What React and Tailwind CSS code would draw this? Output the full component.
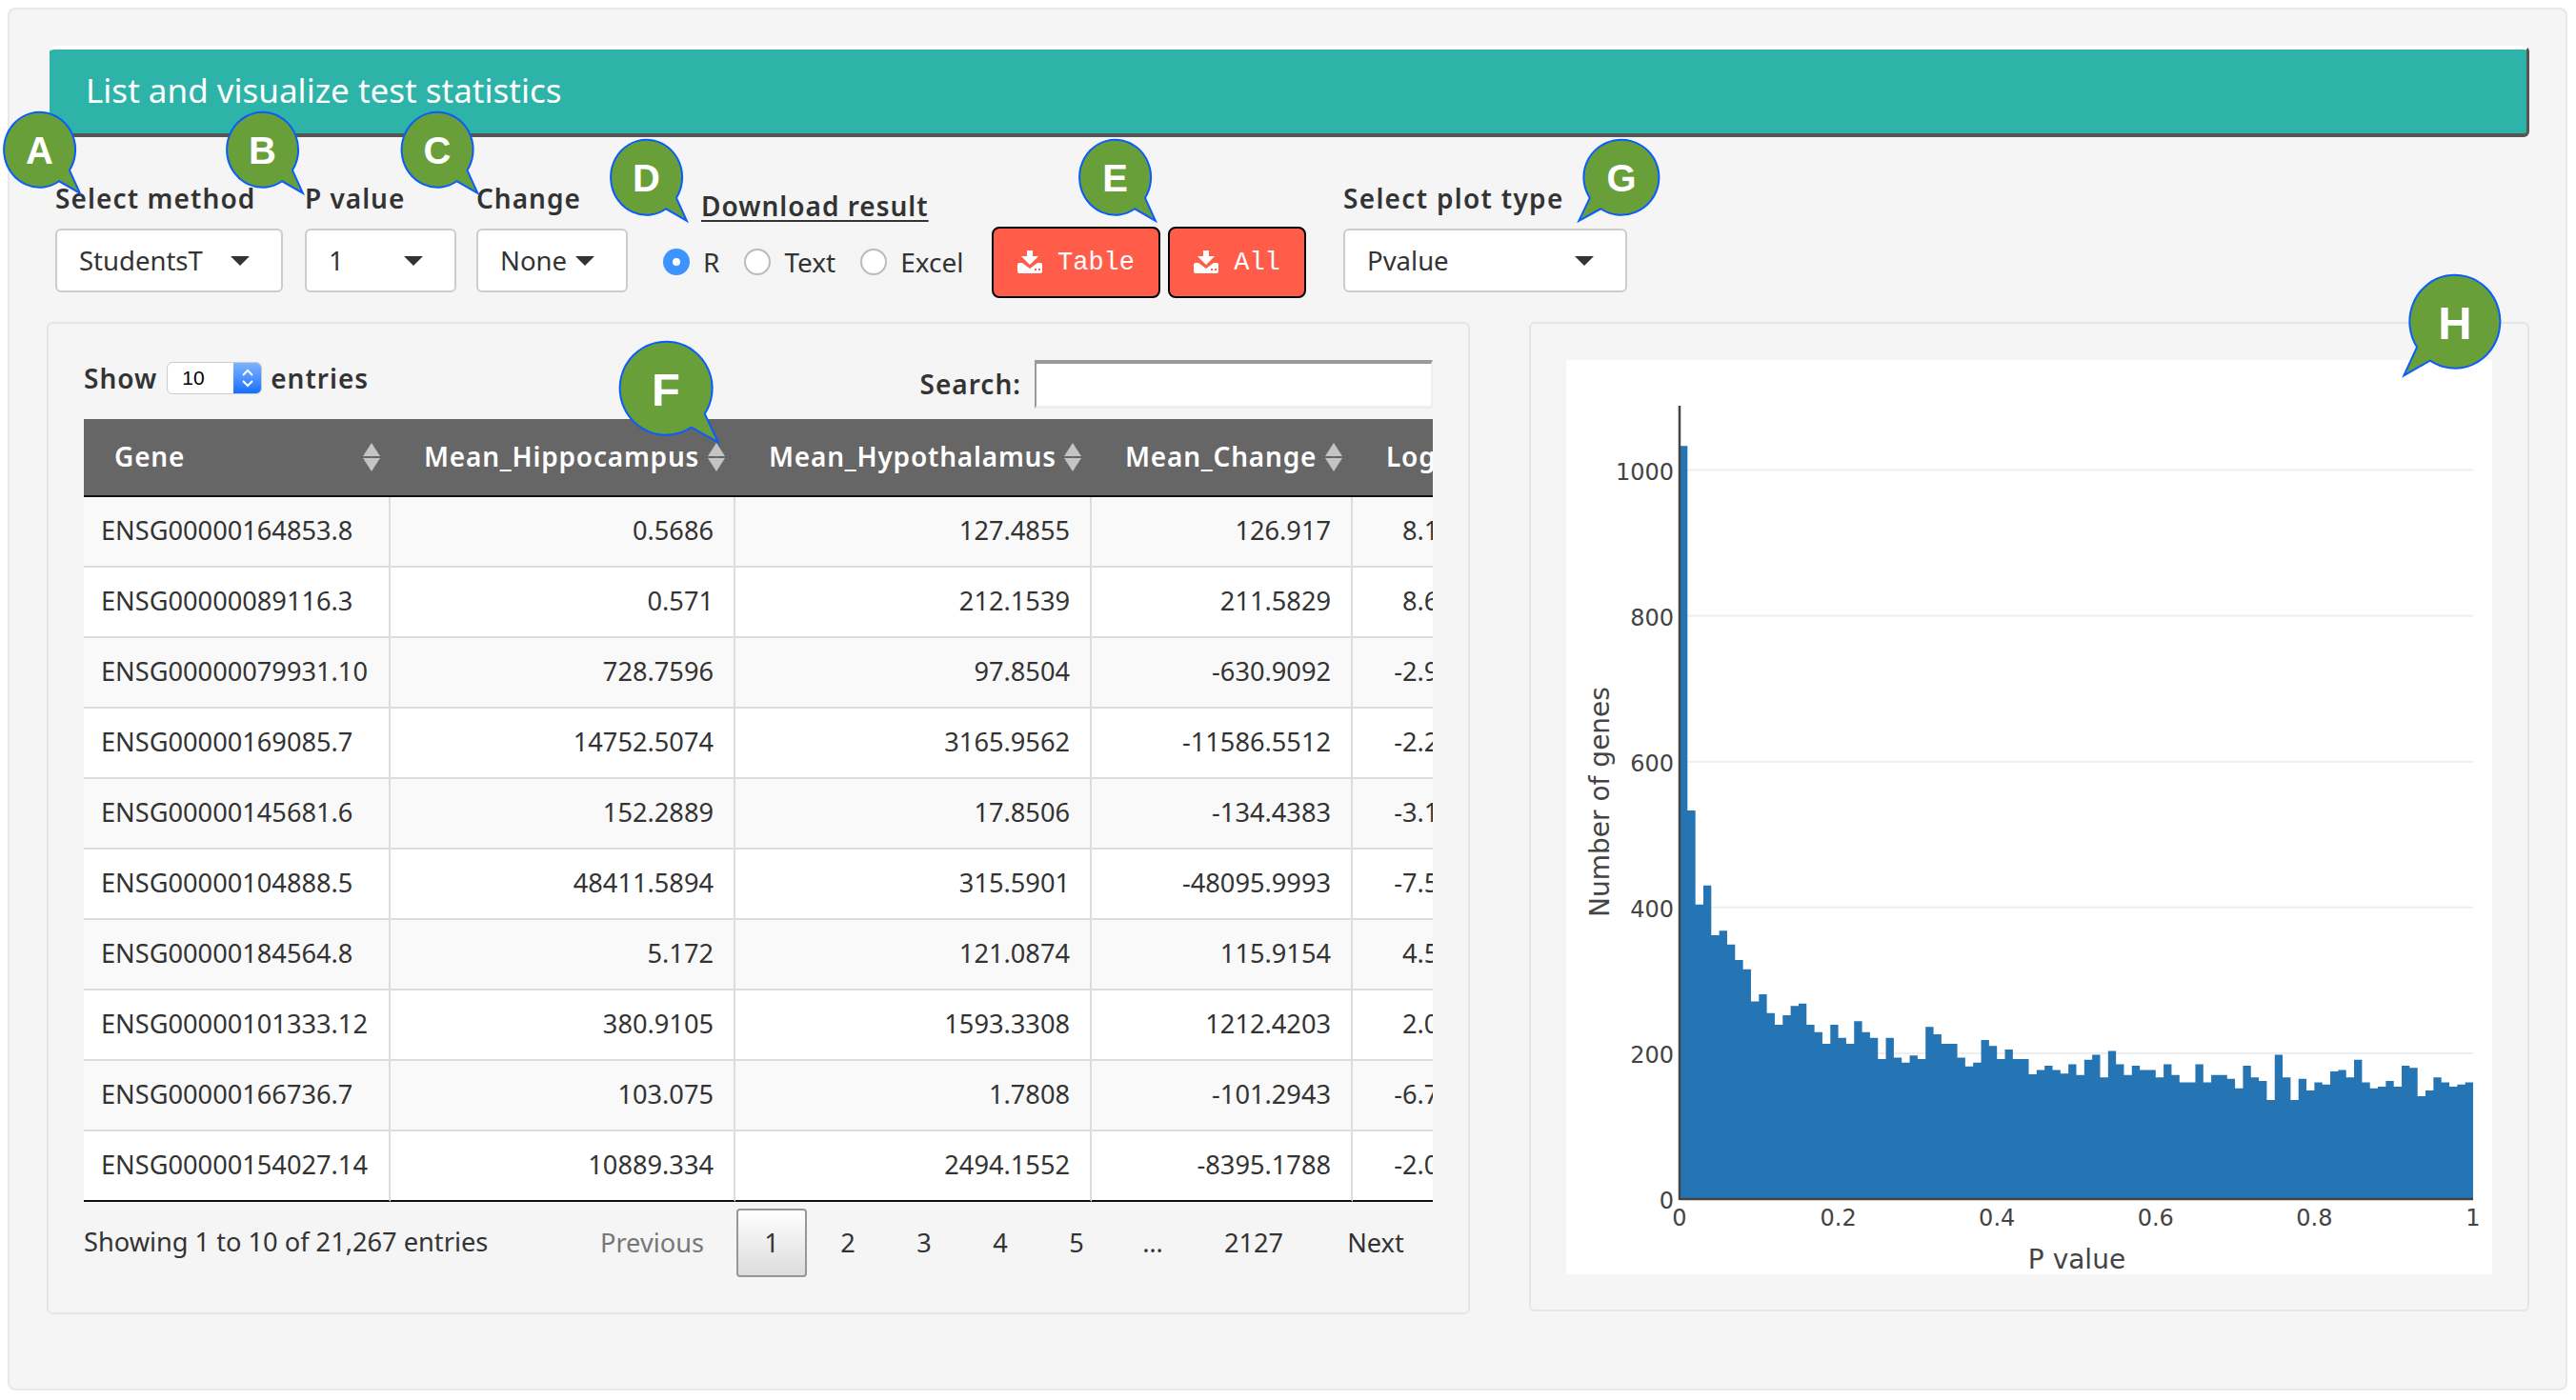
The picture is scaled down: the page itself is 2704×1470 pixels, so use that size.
const rows = [
    ['ENSG00000164853.8', '0.5686', '127.4855', '126.917', '8.1383'],
    ['ENSG00000089116.3', '0.571', '212.1539', '211.5829', '8.6563'],
    ['ENSG00000079931.10', '728.7596', '97.8504', '-630.9092', '-2.9069'],
    ['ENSG00000169085.7', '14752.5074', '3165.9562', '-11586.5512', '-2.2202'],
    ['ENSG00000145681.6', '152.2889', '17.8506', '-134.4383', '-3.1148'],
    ['ENSG00000104888.5', '48411.5894', '315.5901', '-48095.9993', '-7.5615'],
    ['ENSG00000184564.8', '5.172', '121.0874', '115.9154', '4.5492'],
    ['ENSG00000101333.12', '380.9105', '1593.3308', '1212.4203', '2.0643'],
    ['ENSG00000166736.7', '103.075', '1.7808', '-101.2943', '-6.7095'],
    ['ENSG00000154027.14', '10889.334', '2494.1552', '-8395.1788', '-2.0326'],
];

const bins = [
    1033, 533, 404, 430, 362, 368, 349, 328, 315, 271, 281, 255, 239, 252, 265, 268, 239, 229, 213, 239,
    221, 213, 244, 229, 221, 192, 221, 194, 187, 197, 192, 236, 226, 213, 213, 194, 182, 187, 218, 210,
    192, 205, 192, 192, 171, 177, 183, 177, 172, 185, 170, 191, 198, 167, 203, 185, 170, 183, 177, 177,
    167, 185, 170, 160, 160, 185, 160, 170, 170, 165, 152, 183, 167, 162, 136, 198, 167, 136, 165, 149,
    160, 157, 175, 177, 167, 191, 160, 152, 154, 162, 154, 183, 180, 141, 149, 167, 160, 154, 157, 160,
];

const callouts = [
    { letter: 'A', cx: 41.5, cy: 157.5, rx: 37.5, ry: 39.5, size: 40 },
    { letter: 'B', cx: 275.5, cy: 157.5, rx: 37.5, ry: 39.5, size: 40 },
    { letter: 'C', cx: 459, cy: 157.5, rx: 37.5, ry: 39.5, size: 40 },
    { letter: 'D', cx: 678.5, cy: 186.5, rx: 37.5, ry: 39.5, size: 40 },
    { letter: 'E', cx: 1170.5, cy: 186.5, rx: 37.5, ry: 39.5, size: 40 },
    { letter: 'G', cx: 1702, cy: 186.5, rx: 39.5, ry: 39.5, size: 40, flip: true },
    { letter: 'F', cx: 699, cy: 408, rx: 48.5, ry: 49, size: 49 },
    { letter: 'H', cx: 2577, cy: 338, rx: 47.5, ry: 49, size: 49, flip: true },
];

const Callouts = () => (
    <svg className="absolute left-0 top-0 pointer-events-none" width="2704" height="1470">
        {callouts.map((c) => {
            const dir = c.flip ? -1 : 1;
            const p1 = [c.cx + dir * 0.84 * c.rx, c.cy + 0.54 * c.ry];
            const p2 = [c.cx + dir * 0.55 * c.rx, c.cy + 0.83 * c.ry];
            const tip = [c.cx + dir * 1.13 * c.rx, c.cy + 1.15 * c.ry];
            const d = `M${p1[0]} ${p1[1]} A${c.rx} ${c.ry} 0 1 ${c.flip ? 1 : 0} ${p2[0]} ${p2[1]} L${tip[0]} ${tip[1]} Z`;
            return (
                <g key={c.letter}>
                    <path d={d} fill="#689f38" stroke="#0a5cff" strokeWidth="2" />
                    <text x={c.cx} y={c.cy + c.size * 0.36} textAnchor="middle" fill="#fff" fontSize={c.size} fontWeight="700" fontFamily="Liberation Sans, sans-serif">
                        {c.letter}
                    </text>
                </g>
            );
        })}
    </svg>
);

const Caret = () => <span className="w-0 h-0 border-x-[10px] border-t-[10px] border-x-transparent border-t-[#333]"></span>;

const Select = ({ value }) => (
    <div className="h-[67px] flex items-center justify-between pl-[23px] pr-[33px] bg-white border-2 border-[#ccc] rounded-md text-[#333] text-[27.5px]">
        <span>{value}</span>
        <Caret />
    </div>
);

const Radio = ({ checked, label, className }) => (
    <div className={`flex items-center ${className}`}>
        {checked ? (
            <span className="w-7 h-7 rounded-full bg-[#3d94ff] flex items-center justify-center">
                <span className="w-2 h-2 rounded-full bg-white"></span>
            </span>
        ) : (
            <span className="w-7 h-7 rounded-full bg-white border-2 border-[#bbb]"></span>
        )}
        <span className="ml-[14px] text-[28px] leading-7 text-[#333]">{label}</span>
    </div>
);

const DownloadIcon = () => (
    <svg width="26" height="24" viewBox="0 0 26 24" fill="#fff" className="-mt-[2px]">
        <path d="M10 0h6v6h6l-9 9l-9-9h6z" />
        <path d="M2 13h3l8 6l8-6h3a2 2 0 0 1 2 2v7a2 2 0 0 1-2 2h-22a2 2 0 0 1-2-2v-7a2 2 0 0 1 2-2z" />
        <rect x="18" y="19" width="2" height="2" fill="#ff5c4a" />
        <rect x="22" y="19" width="2" height="2" fill="#ff5c4a" />
    </svg>
);

const DownloadButton = ({ label, className }) => (
    <button className={`h-[75px] mt-[42px] flex items-center justify-center gap-[16px] bg-[#ff5c4a] border-2 border-black rounded-lg text-white text-[27px] font-['Liberation_Mono',monospace] ${className}`}>
        <DownloadIcon />
        <span className="mt-[2px]">{label}</span>
    </button>
);

const SortIcon = () => (
    <svg width="18" height="30" viewBox="0 0 18 30" fill="#c4c4c4">
        <path d="M9 0l9 14h-18z" />
        <path d="M0 16h18l-9 14z" />
    </svg>
);

const HeaderCell = ({ label, className }) => (
    <th className={`h-[82px] p-0 pr-[11px] bg-[#666] border-b-2 border-[#111] text-white text-left text-[28px] tracking-[0.8px] font-semibold whitespace-nowrap ${className}`}>
        <div className="flex items-center justify-between">
            <span className="-mt-[2px]">{label}</span>
            <SortIcon />
        </div>
    </th>
);

const Chart = () => {
    const x0 = 119;
    const x1 = 952;
    const y0 = 881;
    const perCount = 0.7655;
    const binW = (x1 - x0) / bins.length;
    let d = `M${x0} ${y0}`;
    bins.forEach((n, i) => {
        const top = y0 - n * perCount;
        d += ` L${x0 + i * binW} ${top} L${x0 + (i + 1) * binW} ${top}`;
    });
    d += ` L${x1} ${y0} Z`;
    return (
        <svg width="972" height="960" fontFamily="DejaVu Sans, sans-serif" fill="#444">
            {[200, 400, 600, 800, 1000].map((t) => (
                <line key={t} x1={x0} x2={x1} y1={y0 - t * perCount} y2={y0 - t * perCount} stroke="#eeeeee" strokeWidth="2" />
            ))}
            <path d={d} fill="#2574b3" />
            <line x1={x0} x2={x0} y1="48" y2={y0 + 1} stroke="#444" strokeWidth="2.5" />
            <line x1={x0} x2={x1} y1={y0} y2={y0} stroke="#444" strokeWidth="2.5" />
            {[0, 200, 400, 600, 800, 1000].map((t) => (
                <text key={t} x="113" y={y0 - t * perCount + 10} textAnchor="end" fontSize="24">
                    {t}
                </text>
            ))}
            {['0', '0.2', '0.4', '0.6', '0.8', '1'].map((t, i) => (
                <text key={t} x={x0 + (i * (x1 - x0)) / 5} y="909" textAnchor="middle" fontSize="24">
                    {t}
                </text>
            ))}
            <text x="536" y="954" textAnchor="middle" fontSize="28">P value</text>
            <text transform="rotate(-90 45 464)" x="45" y="464" textAnchor="middle" fontSize="28">Number of genes</text>
        </svg>
    );
};

export default function App() {
    return (
        <div className="relative w-[2704px] h-[1470px] bg-white font-['Noto_Sans',sans-serif] overflow-hidden">
            <div className="mx-2 mt-2 w-[2687px] bg-[#f5f5f5] border-2 border-[#e8e8e8] rounded-lg pl-[39px] pt-[38px] pb-[78px]">
                {/* Header */}
                <div className="ml-[3px] w-[2603px] h-[96px] flex items-center pl-[38px] pb-[2px] bg-[#2db3a8] border-t-4 border-t-white border-b-4 border-b-[#555] border-r-[3px] border-r-[#555] rounded-md text-white text-[35px]">
                    List and visualize test statistics
                </div>

                {/* Controls */}
                <div className="flex items-start ml-[9px] mt-[52px] h-[142px]">
                    <div className="w-[239px]">
                        <div className="h-7 -mt-[2px] mb-[18px] leading-7 text-[28px] tracking-[1.1px] font-semibold text-[#333]">Select method</div>
                        <Select value="StudentsT" />
                    </div>
                    <div className="w-[159px] ml-[23px]">
                        <div className="h-7 -mt-[2px] mb-[18px] leading-7 text-[28px] tracking-[1px] font-semibold text-[#333]">P value</div>
                        <Select value="1" />
                    </div>
                    <div className="w-[159px] ml-[21px]">
                        <div className="h-7 -mt-[2px] mb-[18px] leading-7 text-[28px] tracking-[1px] font-semibold text-[#333]">Change</div>
                        <Select value="None" />
                    </div>
                    <div className="w-[314px] ml-[37px]">
                        <div className="ml-10 mt-[4px] leading-8 text-[28px] tracking-[1px] font-semibold text-[#333] underline underline-offset-4 whitespace-nowrap">Download result</div>
                        <div className="flex mt-[29px]">
                            <Radio checked label="R" />
                            <Radio label="Text" className="ml-[26px]" />
                            <Radio label="Excel" className="ml-[26px]" />
                        </div>
                    </div>
                    <DownloadButton label="Table" className="w-[177px] ml-[31px]" />
                    <DownloadButton label="All" className="w-[145px] ml-2" />
                    <div className="w-[298px] ml-[39px]">
                        <div className="h-7 -mt-[2px] mb-[18px] leading-7 text-[28px] tracking-[1.3px] font-semibold text-[#333] whitespace-nowrap">Select plot type</div>
                        <Select value="Pvalue" />
                    </div>
                </div>

                <div className="flex items-start gap-[62px]">
                    {/* Table well */}
                    <div className="w-[1494px] bg-[#f5f5f5] border-2 border-[#e5e5e5] rounded-md px-[37px] pt-[38px] pb-[37px]">
                        <div className="flex items-center justify-between h-[51px] mb-[11px] text-[#333] text-[28px] tracking-[1px] font-semibold">
                            <div className="flex items-center -mt-[13px]">
                                <span>Show</span>
                                <div className="flex ml-[10px] w-[100px] h-[34px] bg-white rounded-md border border-[#ccc] overflow-hidden font-['Liberation_Sans',sans-serif] font-normal text-[21px] tracking-normal text-black">
                                    <span className="flex-1 pl-[15px] leading-[32px]">10</span>
                                    <span className="w-[29px] flex items-center justify-center bg-linear-to-b from-[#7db2ff] to-[#0f6fff]">
                                        <svg width="14" height="24" viewBox="0 0 14 24" fill="none" stroke="#fff" strokeWidth="2">
                                            <path d="M2 9l5-5 5 5" />
                                            <path d="M2 15l5 5 5-5" />
                                        </svg>
                                    </span>
                                </div>
                                <span className="ml-[9px]">entries</span>
                            </div>
                            <div className="flex items-center">
                                <span className="mr-[14px] -mt-[2px]">Search:</span>
                                <input readOnly className="w-[418px] h-[51px] bg-white border-t-4 border-l-2 border-r-2 border-b-[3px] border-t-[#999] border-l-[#999] border-r-[#eee] border-b-[#eee]" />
                            </div>
                        </div>

                        <div className="overflow-hidden">
                            <table className="table-fixed w-[1492px] border-separate border-spacing-0 text-[27.2px] text-[#333]">
                                <colgroup>
                                    <col className="w-[322px]" />
                                    <col className="w-[362px]" />
                                    <col className="w-[374px]" />
                                    <col className="w-[274px]" />
                                    <col className="w-[160px]" />
                                </colgroup>
                                <thead>
                                    <tr>
                                        <HeaderCell label="Gene" className="pl-8" />
                                        <HeaderCell label="Mean_Hippocampus" className="pl-[35px]" />
                                        <HeaderCell label="Mean_Hypothalamus" className="pl-[35px]" />
                                        <HeaderCell label="Mean_Change" className="pl-[35px]" />
                                        <HeaderCell label="Log2FC" className="pl-[35px]" />
                                    </tr>
                                </thead>
                                <tbody>
                                    {rows.map((row, i) => {
                                        const last = i === rows.length - 1;
                                        const rowCls = `h-[74px] p-0 pb-[2px] border-b-2 whitespace-nowrap ${i % 2 === 0 ? 'bg-[#f9f9f9]' : 'bg-white'} ${last ? 'border-b-[#111]' : 'border-b-[#ddd]'}`;
                                        return (
                                            <tr key={row[0]}>
                                                <td className={`${rowCls} pl-[18px] border-r-2 border-r-[#ddd]`}>{row[0]}</td>
                                                <td className={`${rowCls} pr-[21px] text-right border-r-2 border-r-[#ddd]`}>{row[1]}</td>
                                                <td className={`${rowCls} pr-[21px] text-right border-r-2 border-r-[#ddd]`}>{row[2]}</td>
                                                <td className={`${rowCls} pr-[21px] text-right border-r-2 border-r-[#ddd]`}>{row[3]}</td>
                                                <td className={`${rowCls} pr-[21px] text-right border-r-2 border-r-[#ddd]`}>{row[4]}</td>
                                            </tr>
                                        );
                                    })}
                                </tbody>
                            </table>
                        </div>

                        {/* Footer */}
                        <div className="flex items-center justify-between mt-[7px] h-[72px] text-[27.2px] text-[#333]">
                            <span className="-mt-[2px]">Showing 1 to 10 of 21,267 entries</span>
                            <div className="flex items-center -mr-[2px]">
                                <span className="pr-[34px] text-[#777]">Previous</span>
                                <span className="w-[74px] h-[72px] mr-[3px] flex items-center justify-center border-2 border-[#979797] rounded-sm bg-linear-to-b from-white to-[#dcdcdc]">1</span>
                                {['2', '3', '4', '5', '…'].map((p) => (
                                    <span key={p} className="w-20 text-center">{p}</span>
                                ))}
                                <span className="w-[132px] text-center">2127</span>
                                <span className="w-[124px] text-center">Next</span>
                            </div>
                        </div>
                    </div>

                    {/* Plot well */}
                    <div className="w-[1050px] bg-[#f5f5f5] border-2 border-[#e5e5e5] rounded-md pl-[37px] pt-[38px] pb-[37px]">
                        <div className="w-[972px] h-[960px] bg-white">
                            <Chart />
                        </div>
                    </div>
                </div>
            </div>
            <Callouts />
        </div>
    );
}
